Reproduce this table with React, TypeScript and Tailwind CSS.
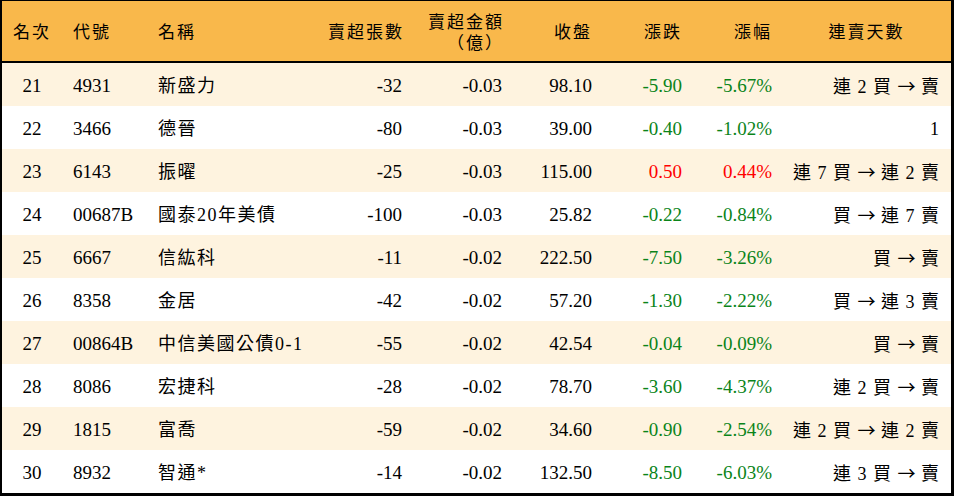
import React from 'react'

type Row = {
  rank: number
  code: string
  name: string
  lots: string
  amount: string
  close: string
  change: string
  pct: string
  streak: string
}

const rows: Row[] = [
  { rank: 21, code: '4931', name: '新盛力', lots: '-32', amount: '-0.03', close: '98.10', change: '-5.90', pct: '-5.67%', streak: '連 2 買 → 賣' },
  { rank: 22, code: '3466', name: '德晉', lots: '-80', amount: '-0.03', close: '39.00', change: '-0.40', pct: '-1.02%', streak: '1' },
  { rank: 23, code: '6143', name: '振曜', lots: '-25', amount: '-0.03', close: '115.00', change: '0.50', pct: '0.44%', streak: '連 7 買 → 連 2 賣' },
  { rank: 24, code: '00687B', name: '國泰20年美債', lots: '-100', amount: '-0.03', close: '25.82', change: '-0.22', pct: '-0.84%', streak: '買 → 連 7 賣' },
  { rank: 25, code: '6667', name: '信紘科', lots: '-11', amount: '-0.02', close: '222.50', change: '-7.50', pct: '-3.26%', streak: '買 → 賣' },
  { rank: 26, code: '8358', name: '金居', lots: '-42', amount: '-0.02', close: '57.20', change: '-1.30', pct: '-2.22%', streak: '買 → 連 3 賣' },
  { rank: 27, code: '00864B', name: '中信美國公債0-1', lots: '-55', amount: '-0.02', close: '42.54', change: '-0.04', pct: '-0.09%', streak: '買 → 賣' },
  { rank: 28, code: '8086', name: '宏捷科', lots: '-28', amount: '-0.02', close: '78.70', change: '-3.60', pct: '-4.37%', streak: '連 2 買 → 賣' },
  { rank: 29, code: '1815', name: '富喬', lots: '-59', amount: '-0.02', close: '34.60', change: '-0.90', pct: '-2.54%', streak: '連 2 買 → 連 2 賣' },
  { rank: 30, code: '8932', name: '智通*', lots: '-14', amount: '-0.02', close: '132.50', change: '-8.50', pct: '-6.03%', streak: '連 3 買 → 賣' },
]

const cols = 'grid grid-cols-[60px_86px_172px_92px_100px_90px_90px_90px_169px] items-center'

// 連賣天數：箭頭用 CJK 字型，比較長
function Streak({ text }: { text: string }) {
  const parts = text.split('→')
  if (parts.length < 2) return <>{text}</>
  return (
    <>
      {parts[0]}
      <span className="font-['Noto_Sans_CJK_TC'] tracking-normal">→</span>
      {parts[1]}
    </>
  )
}

export default function App() {
  return (
    <div
      className="w-[954px] h-[496px] bg-white text-black border-l-2 border-t border-r-[3px] border-b-[3px] border-black"
      style={{ fontFamily: '"Liberation Serif", "Noto Sans CJK TC", serif' }}
    >
      {/* 表頭 */}
      <div className={`${cols} h-[62px] pt-[3px] bg-[#f9b84b] border-b-2 border-black text-[17px] tracking-[2px]`}>
        <div className="text-center">名次</div>
        <div className="pl-[11px]">代號</div>
        <div className="pl-[10px]">名稱</div>
        <div className="text-right pr-[8px]">賣超張數</div>
        <div className="text-right pr-[8px] leading-[21px]">
          賣超金額
          <br />
          （億）
        </div>
        <div className="text-right pr-[10px]">收盤</div>
        <div className="text-right pr-[10px]">漲跌</div>
        <div className="text-right pr-[10px]">漲幅</div>
        <div className="text-center">連賣天數</div>
      </div>

      {rows.map((r, i) => {
        const up = !r.change.startsWith('-')
        const color = up ? 'text-[#ff0000]' : 'text-[#0a8419]'
        return (
          <div key={r.rank} className={`${cols} h-[43px] pt-[3px] text-[19px] ${i % 2 === 0 ? 'bg-[#fef3df]' : 'bg-white'}`}>
            <div className="text-center">{r.rank}</div>
            <div className="pl-[11px]">{r.code}</div>
            <div className="pl-[10px] text-[18px] tracking-[1.5px] whitespace-nowrap">{r.name}</div>
            <div className="text-right pr-[10px]">{r.lots}</div>
            <div className="text-right pr-[10px]">{r.amount}</div>
            <div className="text-right pr-[10px]">{r.close}</div>
            <div className={`text-right pr-[10px] ${color}`}>{r.change}</div>
            <div className={`text-right pr-[10px] ${color}`}>{r.pct}</div>
            <div className="text-right pr-[11px] text-[18px] tracking-[1px] whitespace-nowrap">
              <Streak text={r.streak} />
            </div>
          </div>
        )
      })}
    </div>
  )
}
